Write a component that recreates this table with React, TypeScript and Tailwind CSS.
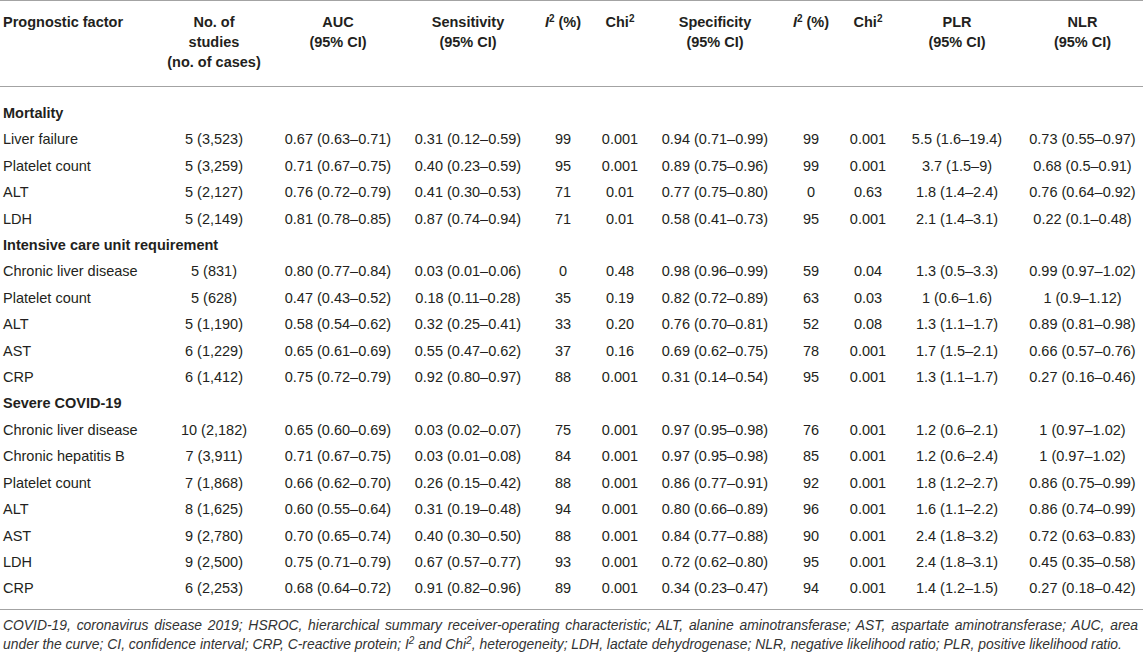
type Row = string[];

interface Group {
  title: string;
  rows: Row[];
}

const groups: Group[] = [
  {
    title: 'Mortality',
    rows: [
      ['Liver failure', '5 (3,523)', '0.67 (0.63–0.71)', '0.31 (0.12–0.59)', '99', '0.001', '0.94 (0.71–0.99)', '99', '0.001', '5.5 (1.6–19.4)', '0.73 (0.55–0.97)'],
      ['Platelet count', '5 (3,259)', '0.71 (0.67–0.75)', '0.40 (0.23–0.59)', '95', '0.001', '0.89 (0.75–0.96)', '99', '0.001', '3.7 (1.5–9)', '0.68 (0.5–0.91)'],
      ['ALT', '5 (2,127)', '0.76 (0.72–0.79)', '0.41 (0.30–0.53)', '71', '0.01', '0.77 (0.75–0.80)', '0', '0.63', '1.8 (1.4–2.4)', '0.76 (0.64–0.92)'],
      ['LDH', '5 (2,149)', '0.81 (0.78–0.85)', '0.87 (0.74–0.94)', '71', '0.01', '0.58 (0.41–0.73)', '95', '0.001', '2.1 (1.4–3.1)', '0.22 (0.1–0.48)'],
    ],
  },
  {
    title: 'Intensive care unit requirement',
    rows: [
      ['Chronic liver disease', '5 (831)', '0.80 (0.77–0.84)', '0.03 (0.01–0.06)', '0', '0.48', '0.98 (0.96–0.99)', '59', '0.04', '1.3 (0.5–3.3)', '0.99 (0.97–1.02)'],
      ['Platelet count', '5 (628)', '0.47 (0.43–0.52)', '0.18 (0.11–0.28)', '35', '0.19', '0.82 (0.72–0.89)', '63', '0.03', '1 (0.6–1.6)', '1 (0.9–1.12)'],
      ['ALT', '5 (1,190)', '0.58 (0.54–0.62)', '0.32 (0.25–0.41)', '33', '0.20', '0.76 (0.70–0.81)', '52', '0.08', '1.3 (1.1–1.7)', '0.89 (0.81–0.98)'],
      ['AST', '6 (1,229)', '0.65 (0.61–0.69)', '0.55 (0.47–0.62)', '37', '0.16', '0.69 (0.62–0.75)', '78', '0.001', '1.7 (1.5–2.1)', '0.66 (0.57–0.76)'],
      ['CRP', '6 (1,412)', '0.75 (0.72–0.79)', '0.92 (0.80–0.97)', '88', '0.001', '0.31 (0.14–0.54)', '95', '0.001', '1.3 (1.1–1.7)', '0.27 (0.16–0.46)'],
    ],
  },
  {
    title: 'Severe COVID-19',
    rows: [
      ['Chronic liver disease', '10 (2,182)', '0.65 (0.60–0.69)', '0.03 (0.02–0.07)', '75', '0.001', '0.97 (0.95–0.98)', '76', '0.001', '1.2 (0.6–2.1)', '1 (0.97–1.02)'],
      ['Chronic hepatitis B', '7 (3,911)', '0.71 (0.67–0.75)', '0.03 (0.01–0.08)', '84', '0.001', '0.97 (0.95–0.98)', '85', '0.001', '1.2 (0.6–2.4)', '1 (0.97–1.02)'],
      ['Platelet count', '7 (1,868)', '0.66 (0.62–0.70)', '0.26 (0.15–0.42)', '88', '0.001', '0.86 (0.77–0.91)', '92', '0.001', '1.8 (1.2–2.7)', '0.86 (0.75–0.99)'],
      ['ALT', '8 (1,625)', '0.60 (0.55–0.64)', '0.31 (0.19–0.48)', '94', '0.001', '0.80 (0.66–0.89)', '96', '0.001', '1.6 (1.1–2.2)', '0.86 (0.74–0.99)'],
      ['AST', '9 (2,780)', '0.70 (0.65–0.74)', '0.40 (0.30–0.50)', '88', '0.001', '0.84 (0.77–0.88)', '90', '0.001', '2.4 (1.8–3.2)', '0.72 (0.63–0.83)'],
      ['LDH', '9 (2,500)', '0.75 (0.71–0.79)', '0.67 (0.57–0.77)', '93', '0.001', '0.72 (0.62–0.80)', '95', '0.001', '2.4 (1.8–3.1)', '0.45 (0.35–0.58)'],
      ['CRP', '6 (2,253)', '0.68 (0.64–0.72)', '0.91 (0.82–0.96)', '89', '0.001', '0.34 (0.23–0.47)', '94', '0.001', '1.4 (1.2–1.5)', '0.27 (0.18–0.42)'],
    ],
  },
];

// column widths, measured off the reference
const widths = ['w-[150px]', 'w-[128px]', 'w-[120px]', 'w-[140px]', 'w-[50px]', 'w-[64px]', 'w-[126px]', 'w-[66px]', 'w-[48px]', 'w-[130px]', 'w-[121px]'];

function Sup() {
  return <sup className="text-[10px] leading-none relative -top-[5px] align-baseline">2</sup>;
}

function I2() {
  return (
    <>
      <i>I</i>
      <Sup /> (%)
    </>
  );
}

function Chi2() {
  return (
    <>
      Chi<Sup />
    </>
  );
}

export default function App() {
  const head = 'align-top font-bold pt-[11px] pb-[14px] leading-[20px]';

  return (
    <div className="w-[1143px] h-[653px] bg-white text-[#231f20] font-['Liberation_Sans',Arial,sans-serif] overflow-hidden">
      <table className="w-full table-fixed border-collapse text-[14.5px]">
        <colgroup>
          {widths.map((w, i) => (
            <col key={i} className={w} />
          ))}
        </colgroup>
        <thead>
          <tr className="border-t border-b border-[#a3a3a3]">
            <th className={`${head} text-left pl-[3px]`}>Prognostic factor</th>
            <th className={`${head} text-center`}>
              No. of
              <br />
              studies
              <br />
              (no. of cases)
            </th>
            <th className={`${head} text-center`}>
              AUC
              <br />
              (95% CI)
            </th>
            <th className={`${head} text-center`}>
              Sensitivity
              <br />
              (95% CI)
            </th>
            <th className={`${head} text-center`}>
              <I2 />
            </th>
            <th className={`${head} text-center`}>
              <Chi2 />
            </th>
            <th className={`${head} text-center`}>
              Specificity
              <br />
              (95% CI)
            </th>
            <th className={`${head} text-center`}>
              <I2 />
            </th>
            <th className={`${head} text-center`}>
              <Chi2 />
            </th>
            <th className={`${head} text-center`}>
              PLR
              <br />
              (95% CI)
            </th>
            <th className={`${head} text-center`}>
              NLR
              <br />
              (95% CI)
            </th>
          </tr>
        </thead>
        <tbody className="border-b border-[#a3a3a3]">
          {groups.map((g, gi) => (
            <>
              <tr key={g.title}>
                <td
                  colSpan={11}
                  className={`font-bold pl-[3px] py-1 leading-[18.4px] ${gi === 0 ? 'pt-[17px]' : ''}`}
                >
                  {g.title}
                </td>
              </tr>
              {g.rows.map((r, ri) => {
                const last = gi === groups.length - 1 && ri === g.rows.length - 1;
                return (
                  <tr key={g.title + ri}>
                    {r.map((c, ci) => (
                      <td
                        key={ci}
                        className={`py-1 leading-[18.4px] whitespace-nowrap ${ci === 0 ? 'text-left pl-[3px]' : 'text-center'} ${last ? 'pb-[11px]' : ''}`}
                      >
                        {c}
                      </td>
                    ))}
                  </tr>
                );
              })}
            </>
          ))}
        </tbody>
      </table>
      <div className="italic text-[13.9px] leading-[19px] text-[#333] pt-[6px] pl-[3px] pr-[5px]">
        {/* first line is justified to the full width, as in the reference */}
        <p className="whitespace-nowrap text-justify [text-align-last:justify]">
          COVID-19, coronavirus disease 2019; HSROC, hierarchical summary receiver-operating characteristic; ALT, alanine
          aminotransferase; AST, aspartate aminotransferase; AUC, area
        </p>
        <p className="whitespace-nowrap">
          under the curve; CI, confidence interval; CRP, C-reactive protein; I<Sup /> and Chi<Sup />, heterogeneity; LDH,
          lactate dehydrogenase; NLR, negative likelihood ratio; PLR, positive likelihood ratio.
        </p>
      </div>
    </div>
  );
}
